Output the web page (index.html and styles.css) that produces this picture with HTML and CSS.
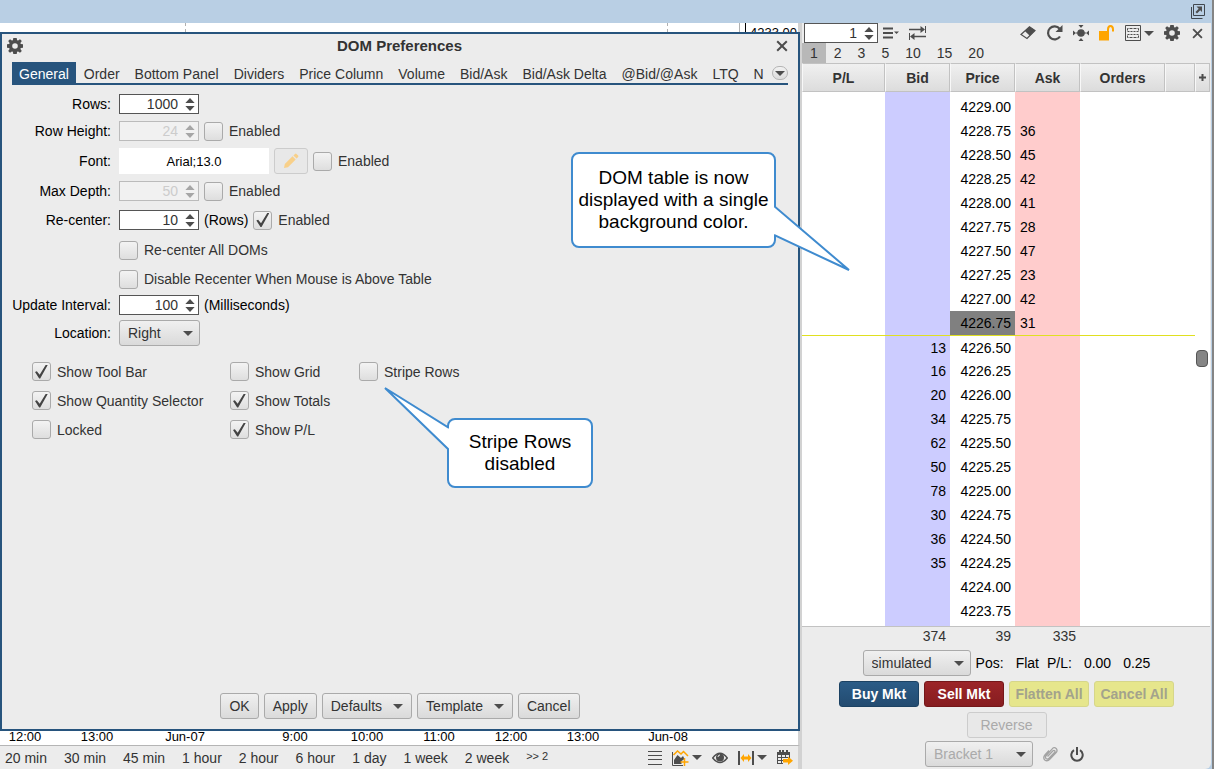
FILE: index.html
```html
<!DOCTYPE html>
<html lang="en">
<head>
<meta charset="utf-8">
<title>DOM Preferences</title>
<link rel="stylesheet" href="styles.css">
</head>
<body>
<svg class="defs" aria-hidden="true">
  <symbol id="gear" viewBox="0 0 16 16"><path fill-rule="evenodd" d="M6.300 0h3.400l.4 2.200 1 .4L13 1.200 14.800 3l-1.400 1.900.4 1 2.200.4v3.400l-2.200.4-.4 1L14.800 13 13 14.800l-1.900-1.400-1 .4-.4 2.200H6.300l-.4-2.200-1-.4L3 14.800 1.200 13l1.400-1.900-.4-1L0 9.700V6.300l2.200-.4.4-1L1.200 3 3 1.200l1.900 1.400 1-.4zM8 5.200a2.800 2.800 0 1 0 0 5.600 2.800 2.800 0 0 0 0-5.600z"/></symbol>
  <symbol id="close" viewBox="0 0 12 12"><path d="M1.200 1.200l9.600 9.600M10.800 1.200L1.200 10.800" fill="none" stroke="#4d4d4d" stroke-width="2"/></symbol>
  <symbol id="updown" viewBox="0 0 10 14"><path d="M5 0l5 5.500H0zM5 14l5-5.500H0z"/></symbol>
  <symbol id="caret" viewBox="0 0 10 5"><path d="M0 0h10L5 5z"/></symbol>
</svg>
<div class="window">
  <header class="topbar">
    <button class="icon-btn" aria-label="Undock">
      <svg width="16" height="16" viewBox="0 0 16 16"><path d="M3.500.5h11v11h-11zM1.500 3v11.500h11" fill="none" stroke="#40474e"/><path d="M6.500 2.500H12V8l-1.800-1.800L7 9.500 5.500 8l3.200-3.300z"/></svg>
    </button>
  </header>
  <main class="main">
    <section class="chart">
      <div class="plot"><i class="gridline"></i><i class="gridline"></i><i class="plot-edge"></i><span class="scale">4233.00</span></div>

      <form class="dialog">
        <div class="titlebar">
          <svg width="16" height="16"><use href="#gear"/></svg>
          <h1>DOM Preferences</h1>
          <button type="button" class="icon-btn" aria-label="Close"><svg width="12" height="12"><use href="#close"/></svg></button>
        </div>
        <nav class="tabs">
          <button type="button" class="active">General</button><button type="button">Order</button><button type="button">Bottom Panel</button><button type="button">Dividers</button><button type="button">Price Column</button><button type="button">Volume</button><button type="button">Bid/Ask</button><button type="button">Bid/Ask Delta</button><button type="button">@Bid/@Ask</button><button type="button">LTQ</button><button type="button">N</button>
          <button type="button" class="more" aria-label="More tabs"><svg width="10" height="5"><use href="#caret"/></svg></button>
        </nav>
        <div class="fields">
          <label for="rows">Rows:</label>
          <div class="field"><span class="spinner"><input id="rows" value="1000"><svg><use href="#updown"/></svg></span></div>
          <label for="rowh">Row Height:</label>
          <div class="field"><span class="spinner off"><input id="rowh" value="24" disabled><svg><use href="#updown"/></svg></span><label class="check"><input type="checkbox">Enabled</label></div>
          <label for="font">Font:</label>
          <div class="field"><input id="font" class="font" value="Arial;13.0" readonly><button type="button" class="btn pencil" disabled aria-label="Edit font"><svg width="16" height="16" viewBox="0 0 16 16"><path d="M1 15l.8-4L9.500 3.300l3.200 3.200L5 14.200zM10.400 2.400L12 .9q.8-.7 1.500 0l1.600 1.600q.7.700 0 1.500l-1.500 1.600z"/></svg></button><label class="check"><input type="checkbox">Enabled</label></div>
          <label for="depth">Max Depth:</label>
          <div class="field"><span class="spinner off"><input id="depth" value="50" disabled><svg><use href="#updown"/></svg></span><label class="check"><input type="checkbox">Enabled</label></div>
          <label for="recenter">Re-center:</label>
          <div class="field"><span class="spinner"><input id="recenter" value="10"><svg><use href="#updown"/></svg></span><span>(Rows)</span><label class="check"><input type="checkbox" checked>Enabled</label></div>
          <label class="check second"><input type="checkbox">Re-center All DOMs</label>
          <label class="check second"><input type="checkbox">Disable Recenter When Mouse is Above Table</label>
          <label for="interval">Update Interval:</label>
          <div class="field"><span class="spinner"><input id="interval" value="100"><svg><use href="#updown"/></svg></span><span>(Milliseconds)</span></div>
          <label for="location">Location:</label>
          <div class="field"><span class="select place"><select id="location"><option>Right</option></select><svg><use href="#caret"/></svg></span></div>
        </div>
        <div class="options">
          <label class="check"><input type="checkbox" checked>Show Tool Bar</label>
          <label class="check"><input type="checkbox">Show Grid</label>
          <label class="check"><input type="checkbox">Stripe Rows</label>
          <label class="check"><input type="checkbox" checked>Show Quantity Selector</label>
          <label class="check wide"><input type="checkbox" checked>Show Totals</label>
          <label class="check"><input type="checkbox">Locked</label>
          <label class="check wide"><input type="checkbox" checked>Show P/L</label>
        </div>
        <div class="actions">
          <button type="button" class="btn">OK</button>
          <button type="button" class="btn">Apply</button>
          <button type="button" class="btn">Defaults<svg width="10" height="5"><use href="#caret"/></svg></button>
          <button type="button" class="btn">Template<svg width="10" height="5"><use href="#caret"/></svg></button>
          <button type="button" class="btn">Cancel</button>
        </div>
        <div class="callout stripe-note">
          <svg width="66" height="64" viewBox="0 0 66 64"><path d="M66 42L2 2l64 62" fill="#fff" stroke="#3f8bcf" stroke-width="2"/></svg>
          <p>Stripe Rows<br>disabled</p>
        </div>
      </form>

      <div class="axis"><span>12:00</span><span>13:00</span><span class="day">Jun-07</span><span class="open">9:00</span><span>10:00</span><span>11:00</span><span>12:00</span><span>13:00</span><span class="day">Jun-08</span></div>
      <footer class="intervals">
        <button>20 min</button><button>30 min</button><button>45 min</button><button>1 hour</button><button>2 hour</button><button>6 hour</button><button>1 day</button><button>1 week</button><button>2 week</button><button class="overflow">&gt;&gt; 2</button>
        <div class="tools">
          <button class="icon-btn" aria-label="List"><svg width="14" height="16" viewBox="0 0 14 16"><path d="M0 1.500h14M0 5.500h14M0 9.500h14M0 14.500h14" stroke="#4d4d4d"/></svg></button>
          <button class="icon-btn" aria-label="Add study"><svg width="17" height="16" viewBox="0 0 17 16"><path d="M.5 2v13.500H11" fill="none" stroke="#4d4d4d"/><path d="M2 14V10l3.500-5L9 8l2-2 1.500 3-3 2v3z"/><path d="M1.500 5l4-4 3.500 3 2.500-2.500L16 6M12.500 8v8M8.500 12h8" fill="none" stroke="#ffa500" stroke-width="1.500"/></svg><svg width="10" height="5"><use href="#caret"/></svg></button>
          <button class="icon-btn" aria-label="Visibility"><svg width="16" height="12" viewBox="0 0 16 12"><path d="M.7 6Q8-3.500 15.300 6 8 15 .7 6z" fill="none" stroke="#4d4d4d" stroke-width="1.400"/><circle cx="8" cy="5.500" r="4"/><path d="M6 5q0-2 2-2" fill="none" stroke="#ececec"/></svg></button>
          <button class="icon-btn" aria-label="Bar spacing"><svg width="16" height="14" viewBox="0 0 16 14"><path d="M1 0v14M15 0v14" stroke="#4d4d4d" stroke-width="2"/><path fill="#ffa500" d="M2.500 7L6 3v2.500h4V3l3.500 4-3.500 4V8.500H6V11z"/></svg><svg width="10" height="5"><use href="#caret"/></svg></button>
          <button class="icon-btn" aria-label="Go to date"><svg width="16" height="15" viewBox="0 0 16 15"><path d="M0 2h2V0h2v2h1V0h2v2h2V0h2v2h2v6h-1V5H1v8h5v1H0z"/><path d="M4.500 5v8M8.500 5v3M0 7.500h13M0 10.500h6" stroke="#4d4d4d" fill="none"/><path d="M6 9h5V6.500l5 4.200-5 4.300v-2.500H6z" fill="#ffa500"/></svg></button>
        </div>
      </footer>
    </section>

    <aside class="dom">
      <div class="dom-tools">
        <span class="spinner"><input aria-label="Quantity" value="1"><svg><use href="#updown"/></svg></span>
        <button class="icon-btn" aria-label="Quantity menu"><svg width="16" height="12" viewBox="0 0 16 12"><path d="M0 1.500h10M0 6h10M0 10.500h10" stroke="#4d4d4d" stroke-width="2"/><path d="M11 4.500h5L13.500 7z"/></svg></button>
        <button class="icon-btn" aria-label="Swap"><svg width="17" height="14" viewBox="0 0 17 14"><path d="M0 3.500h13M4 10.500h13" stroke="#4d4d4d" stroke-width="1.500"/><path d="M16.500 0v7M.5 7v7" stroke="#4d4d4d"/><path d="M11.500 0l4.500 3.500-4.500 3.500zM5.500 7L1 10.500 5.500 14z"/></svg></button>
        <div class="right-tools">
          <button class="icon-btn" aria-label="Clear"><svg width="16" height="14" viewBox="0 0 16 14"><path d="M1 8.500L9.500.8 15 4.500 7 12.500z" fill="none" stroke="#4d4d4d" stroke-width="1.200"/><path d="M9.500.8L15 4.500l-5.200 5.300L4.800 5z"/></svg></button>
          <button class="icon-btn" aria-label="Refresh"><svg width="17" height="16" viewBox="0 0 17 16"><path d="M13.600 3.800A6.500 6.500 0 1 0 14 11.500" fill="none" stroke="#4d4d4d" stroke-width="2.200"/><path d="M16.500 0v7h-7z"/></svg></button>
          <button class="icon-btn" aria-label="Center"><svg width="16" height="16" viewBox="0 0 16 16"><circle cx="8" cy="8" r="3.800"/><path d="M5.500 0h5L8 3zM5.500 16h5L8 13zM0 5.500v5L3 8zM16 5.500v5L13 8z"/><path d="M3 8h10" stroke="#4d4d4d"/></svg></button>
          <button class="icon-btn" aria-label="Unlock"><svg width="16" height="16" viewBox="0 0 16 16"><path d="M0 6h10v9.500H0z" fill="#ffa500"/><path d="M9 7.500V4.500Q9 1 11.500 1T14 4.500V6.500" fill="none" stroke="#ffa500" stroke-width="2"/></svg></button>
          <button class="icon-btn" aria-label="Keyboard"><svg width="16" height="16" viewBox="0 0 16 16"><path d="M.5.5h15v15H.5z" fill="none" stroke="#4d4d4d"/><path d="M2.500 5.500v-2h11v2M2.500 10.500v2h11v-2" fill="none" stroke="#4d4d4d" stroke-dasharray="3 1"/><path d="M2.500 6.500h11M2.500 9.500h11" stroke="#4d4d4d" stroke-dasharray="2 1"/></svg><svg width="10" height="5"><use href="#caret"/></svg></button>
          <button class="icon-btn" aria-label="Settings"><svg width="16" height="16"><use href="#gear"/></svg></button>
          <button class="icon-btn shut" aria-label="Close DOM"><svg width="11" height="11"><use href="#close"/></svg></button>
        </div>
      </div>
      <div class="quantities"><button class="on">1</button><button>2</button><button>3</button><button>5</button><button>10</button><button>15</button><button>20</button></div>
      <div class="ladder">
        <table>
          <colgroup><col class="c-pl"><col class="c-bid"><col class="c-price"><col class="c-ask"><col class="c-orders"><col class="c-blank"><col class="c-add"></colgroup>
          <thead><tr><th>P/L</th><th>Bid</th><th>Price</th><th>Ask</th><th>Orders</th><th></th><th class="add"><svg width="7" height="7" viewBox="0 0 7 7"><path d="M0 3.500h7M3.500 0v7" stroke="#4d4d4d" stroke-width="2"/></svg></th></tr></thead>
          <tbody>
            <tr class="pad"><td></td><td></td><td></td><td></td></tr>
            <tr><td></td><td></td><td>4229.00</td><td></td></tr>
            <tr><td></td><td></td><td>4228.75</td><td>36</td></tr>
            <tr><td></td><td></td><td>4228.50</td><td>45</td></tr>
            <tr><td></td><td></td><td>4228.25</td><td>42</td></tr>
            <tr><td></td><td></td><td>4228.00</td><td>41</td></tr>
            <tr><td></td><td></td><td>4227.75</td><td>28</td></tr>
            <tr><td></td><td></td><td>4227.50</td><td>47</td></tr>
            <tr><td></td><td></td><td>4227.25</td><td>23</td></tr>
            <tr><td></td><td></td><td>4227.00</td><td>42</td></tr>
            <tr><td></td><td></td><td class="last">4226.75</td><td>31</td></tr>
            <tr class="mid"><td></td><td>13</td><td>4226.50</td><td></td><td></td><td></td></tr>
            <tr><td></td><td>16</td><td>4226.25</td><td></td></tr>
            <tr><td></td><td>20</td><td>4226.00</td><td></td></tr>
            <tr><td></td><td>34</td><td>4225.75</td><td></td></tr>
            <tr><td></td><td>62</td><td>4225.50</td><td></td></tr>
            <tr><td></td><td>50</td><td>4225.25</td><td></td></tr>
            <tr><td></td><td>78</td><td>4225.00</td><td></td></tr>
            <tr><td></td><td>30</td><td>4224.75</td><td></td></tr>
            <tr><td></td><td>36</td><td>4224.50</td><td></td></tr>
            <tr><td></td><td>35</td><td>4224.25</td><td></td></tr>
            <tr><td></td><td></td><td>4224.00</td><td></td></tr>
            <tr><td></td><td></td><td>4223.75</td><td></td></tr>
            <tr class="pad"><td></td><td></td><td></td><td></td></tr>
          </tbody>
          <tfoot><tr><td></td><td>374</td><td>39</td><td>335</td><td colspan="3"></td></tr></tfoot>
        </table>
        <i class="thumb"></i>
      </div>
      <div class="orders">
        <div class="line">
          <span class="select account"><select aria-label="Account"><option>simulated</option></select><svg><use href="#caret"/></svg></span>
          <dl><dt>Pos:</dt><dd class="pos">Flat</dd><dt>P/L:</dt><dd>0.00</dd><dd>0.25</dd></dl>
        </div>
        <div class="line"><button class="btn order buy">Buy Mkt</button><button class="btn order sell">Sell Mkt</button><button class="btn order flat" disabled>Flatten All</button><button class="btn order flat" disabled>Cancel All</button></div>
        <div class="line"><button class="btn reverse" disabled>Reverse</button></div>
        <div class="line last-line">
          <span class="select account"><select aria-label="Exit strategy" disabled><option>Bracket 1</option></select><svg><use href="#caret"/></svg></span>
          <button class="icon-btn clip" aria-label="Attach"><svg width="15" height="16" viewBox="0 0 15 16"><path d="M4.500 10.500L10 4.800q1-.8 1.700-.1.700.8-.2 1.800L6 12.300q-1.600 1.400-2.900.2-1.300-1.400.2-3L9 3.200Q11 .6 13.200 2.500q1.800 2-.3 4.300L7 13q-2.600 2.900-5.200 1-2.200-2.400.3-5.200L6 4.500" fill="none" stroke="#a3a3a3" stroke-width="1.300"/></svg></button>
          <button class="icon-btn power" aria-label="Power"><svg width="14" height="15" viewBox="0 0 14 15"><path d="M4 3.200a5.700 5.700 0 1 0 6 0M7 0v8" fill="none" stroke="#4d4d4d" stroke-width="2"/></svg></button>
        </div>
      </div>
    </aside>
    <div class="callout table-note">
      <svg width="77" height="66" viewBox="0 0 77 66"><path d="M0 1l75 64L0 30" fill="#fff" stroke="#3f8bcf" stroke-width="2"/></svg>
      <p>DOM table is now<br>displayed with a single<br>background color.</p>
    </div>
  </main>
</div>
</body>
</html>
```
FILE: styles.css
```css
* { box-sizing: border-box; }
body { margin: 0; font: 14px/16px "Liberation Sans", Arial, sans-serif; color: #333; background: #ececec; }
button, input, select { font: inherit; color: inherit; margin: 0; }
button { background: none; border: 0; padding: 0; white-space: nowrap; }
svg { fill: #4d4d4d; display: block; flex: none; }
.defs { position: absolute; width: 0; height: 0; }
.icon-btn { display: flex; align-items: center; gap: 3px; }

.window { min-height: 100vh; display: flex; flex-direction: column; border-right: 2px solid #858585; background: #b9cfe4; }
.topbar { height: 23px; display: flex; justify-content: flex-end; align-items: center; padding-right: 6px; }
.main { flex: 1; display: flex; position: relative; padding-right: 1px; }

/* chart side */
.chart { flex: 1; min-width: 0; display: flex; flex-direction: column; background: #ececec; }
.plot { height: 9px; overflow: hidden; display: flex; background: #fff; border-right: 2px solid #d2d2d2; }
.gridline { width: 482px; flex: 0 1 482px; border-right: 1px dashed #b0b0b0; }
.gridline:first-child { flex-basis: 186px; }
.plot-edge { flex: 1; border-right: 1px solid #b0b0b0; }
.scale { margin-left: 5px; border-left: 1px solid #000; padding: 2px 4px 0; width: 53px; font-size: 13px; color: #000; }
.dialog { flex: 1; position: relative; display: flex; flex-direction: column; border: 2px solid #27547d; background: #ececec; padding: 0 10px 10px; }
.titlebar { display: flex; align-items: center; height: 28px; margin-left: -5px; padding-bottom: 4px; }
.titlebar h1 { flex: 1; margin: 0; text-align: center; font-size: 15px; line-height: 18px; }
.tabs { display: flex; align-items: stretch; height: 23px; gap: 1px; border-bottom: 2px solid #27547d; }
.tabs button { padding: 3px 7px 0; }
.tabs .active { background: #27547d; color: #fff; }
.tabs .more { margin: 4px 0 3px auto; padding: 0; width: 19px; border: 1px solid #b4b4b4; border-radius: 7px; background: linear-gradient(#f2f2f2, #dcdcdc); display: flex; align-items: center; justify-content: center; }
.fields { display: grid; grid-template-columns: 99px 1fr; column-gap: 8px; grid-template-rows: 26px 28px 32px 28px 30px 30px 28px 24px 32px; align-items: center; padding-top: 6px; color: #000; }
.fields > label:not(.check) { text-align: right; white-space: nowrap; }
.field { display: flex; align-items: center; gap: 5px; }
.second { grid-column: 2; }
.spinner { position: relative; width: 80px; }
.spinner input { display: block; width: 100%; height: 20px; border: 1px solid #555; border-radius: 0; background: #fff; color: #333; text-align: right; padding: 0 20px 0 2px; }
.spinner svg { position: absolute; right: 4px; top: 4px; width: 10px; height: 13px; }
.spinner.off input { border-color: #bbb; background: #f1f1f1; color: #ccc; }
.spinner.off svg { fill: #a6a6a6; }
.font { width: 150px; height: 26px; border: 0; background: #fff; text-align: center; font-size: 13px; }
.check { display: flex; align-items: center; gap: 6px; color: #333; white-space: nowrap; }
.check input { appearance: none; width: 19px; height: 19px; border: 1px solid #aaa; border-radius: 3px; background: linear-gradient(#f3f3f3, #dedede); display: grid; place-items: center; }
.check input:checked::after { content: ""; width: 13px; height: 14px; background: #444; clip-path: polygon(0 54%, 14% 48%, 36% 74%, 84% 0, 100% 0, 40% 100%, 32% 100%); }
.btn { height: 26px; border: 1px solid #aaa; border-radius: 3px; background: linear-gradient(#f0f0f0, #dadada); padding: 0 8px; display: flex; align-items: center; justify-content: center; gap: 11px; }
.btn:disabled { color: #aaa; border-color: #ccc; background: #e8e8e8; }
.pencil { width: 34px; padding: 0; }
.pencil svg { fill: #f8d08a; }
.select { position: relative; display: block; }
.select select { appearance: none; display: block; width: 100%; height: 26px; border: 1px solid #aaa; border-radius: 3px; background: linear-gradient(#f0f0f0, #dadada); padding: 0 8px; color: #333; opacity: 1; }
.select select:disabled { color: #aaa; }
.select svg { position: absolute; right: 7px; top: 11px; width: 10px; height: 5px; }
.place { width: 81px; }
.options { display: grid; grid-template-columns: 198px 129px auto; grid-auto-rows: 29px; align-items: center; padding: 8px 0 0 20px; }
.options .wide { grid-column: 2 / span 2; }
.actions { display: flex; justify-content: center; gap: 5px; margin-top: auto; }
.axis { display: flex; height: 15px; background: #fff; border-right: 2px solid #d2d2d2; border-bottom: 1px solid #b5b5b5; padding-right: 2px; font-size: 13px; line-height: 12px; color: #000; }
.axis span { flex: 0 0 72px; text-align: center; }
.axis span:first-child { flex-basis: 50px; margin-right: 11px; }
.axis .day { margin-left: 16px; }
.axis .day:last-child { margin-left: 13px; }
.axis .open { margin-left: 38px; }
.intervals { display: flex; align-items: center; height: 23px; gap: 17px; padding: 0 5px; border-right: 2px solid #d2d2d2; }
.intervals .overflow { font-size: 11px; line-height: 12px; padding-bottom: 3px; }
.tools { margin-left: auto; display: flex; align-items: center; gap: 10px; }

/* callouts */
.callout { position: absolute; color: #000; font-size: 19px; line-height: 22px; text-align: center; }
.callout p { margin: 0; border: 2px solid #3f8bcf; border-radius: 8px; background: #fff; display: flex; align-items: center; justify-content: center; height: 100%; white-space: nowrap; }
.callout svg { position: absolute; z-index: 1; }
.table-note { right: 436px; top: 129px; width: 205px; height: 96px; }
.table-note svg { left: 203px; top: 53px; }
.stripe-note { left: 445px; top: 384px; width: 146px; height: 70px; }
.stripe-note svg { right: 144px; top: -32px; }

/* DOM side */
.dom { flex: 0 0 411px; display: flex; flex-direction: column; background: #ececec; border-left: 2px solid #d2d2d2; border-bottom-right-radius: 6px; }
.dom-tools { display: flex; align-items: center; height: 20px; gap: 5px; padding: 0 8px 0 2px; }
.dom-tools .spinner { width: 74px; }
.dom-tools > .icon-btn + .icon-btn { margin-left: 5px; }
.right-tools { margin-left: auto; display: flex; gap: 10px; align-items: center; }
.right-tools .shut { margin-left: 2px; }
.quantities { display: flex; height: 20px; }
.quantities button { padding: 0 8px; }
.quantities .on { background: #b8b8b8; }
.ladder { position: relative; padding-right: 1px; }
table { width: 100%; table-layout: fixed; border-collapse: separate; border-spacing: 0; background: #fff; }
.c-pl { width: 83px; } .c-bid, .c-price, .c-ask { width: 65px; } .c-orders { width: 85px; } .c-blank { width: 30px; }
th { height: 29px; padding: 0; font-size: 14px; border: 1px solid #c2c2c2; border-left-color: #f8f8f8; background: linear-gradient(#f0f0f0, #dcdcdc); }
th svg { margin: 0 auto; }
tbody { color: #000; }
tbody td { height: 24px; padding: 0 4px; text-align: right; }
tbody td:nth-child(2) { background: #ccf; }
tbody td:nth-child(4) { background: #fcc; text-align: left; padding-left: 5px; }
tbody .pad td { height: 3px; }
tbody .mid td { border-top: 1px solid #e0e020; }
tbody .last { background: #808080; }
tfoot td { height: 19px; padding: 0 4px; text-align: right; border-top: 1px solid #c2c2c2; background: #ececec; }
.thumb { position: absolute; right: 3px; top: 287px; width: 12px; height: 17px; border: 1px solid #555; border-radius: 4px; background: #858585; }
.orders { display: flex; flex-direction: column; gap: 5px; padding-top: 5px; }
.line { display: flex; justify-content: center; align-items: center; gap: 5px; }
.account { width: 108px; }
dl { display: flex; margin: 0; color: #000; }
dt, dd { margin: 0; }
.pos { margin: 0 8px 0 12px; }
dd:not(.pos) { margin-left: 12px; }
.order { width: 80px; padding: 0; font-weight: bold; }
.buy { background: linear-gradient(#2b5c87, #234b70); border-color: #1c4263; color: #fff; }
.sell { background: linear-gradient(#9c2528, #861d20); border-color: #741719; color: #fff; }
.flat:disabled { background: #e6e68c; border-color: #d6d68a; color: #a3a38c; }
.reverse { width: 80px; }
.last-line { margin-top: -2px; padding-right: 4px; }
.clip { margin-left: 5px; }
.power { margin-left: 7px; }
```
